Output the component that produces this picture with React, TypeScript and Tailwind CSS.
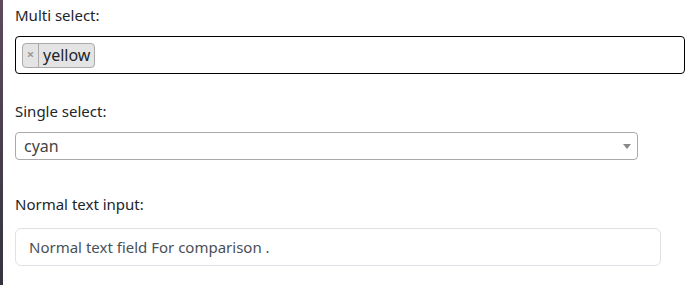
import React from "react";

export default function App() {
  return (
    <div className="flex w-[690px] h-[285px] bg-white overflow-hidden" style={{ fontFamily: '"Noto Sans", "Open Sans", sans-serif' }}>
      <div className="w-[3px] h-full shrink-0 bg-gradient-to-b from-[#5e4a5c] to-[#34343f]" />
      <div className="flex-1 pl-[12px] pr-[5px] pt-[5px] flex flex-col">
        <label className="text-[15px] leading-[20px] text-[#212529]">Multi select:</label>
        <div className="mt-[11px] h-[38px] border border-black rounded-[4px] flex items-center px-[6px]">
          <div className="flex items-stretch h-[25px] bg-[#e4e4e4] border border-[#aaa] rounded-[4px]">
            <span className="w-[16px] flex items-center justify-center text-[#999] text-[13px] font-bold border-r border-[#aaa]">×</span>
            <span className="px-[4px] text-[16px] leading-[23px] text-[#212529]">yellow</span>
          </div>
        </div>
        <label className="mt-[27px] text-[15px] leading-[20px] text-[#212529]">Single select:</label>
        <div className="mt-[11px] w-[623px] h-[28px] border border-[#aaa] rounded-[4px] flex items-center pl-[8px] pr-[6px]">
          <span className="flex-1 text-[16px] leading-[26px] text-[#444]">cyan</span>
          <svg width="8" height="5" viewBox="0 0 8 5"><path d="M0 0h8L4 5z" fill="#888" /></svg>
        </div>
        <label className="mt-[34px] text-[15px] leading-[20px] text-[#212529]">Normal text input:</label>
        <div className="mt-[14px] w-[646px] h-[38px] border border-[#dee2e6] rounded-[6px] flex items-center px-[13px]">
          <span className="text-[15px] text-[#495057]">Normal text field For comparison .</span>
        </div>
      </div>
    </div>
  );
}
